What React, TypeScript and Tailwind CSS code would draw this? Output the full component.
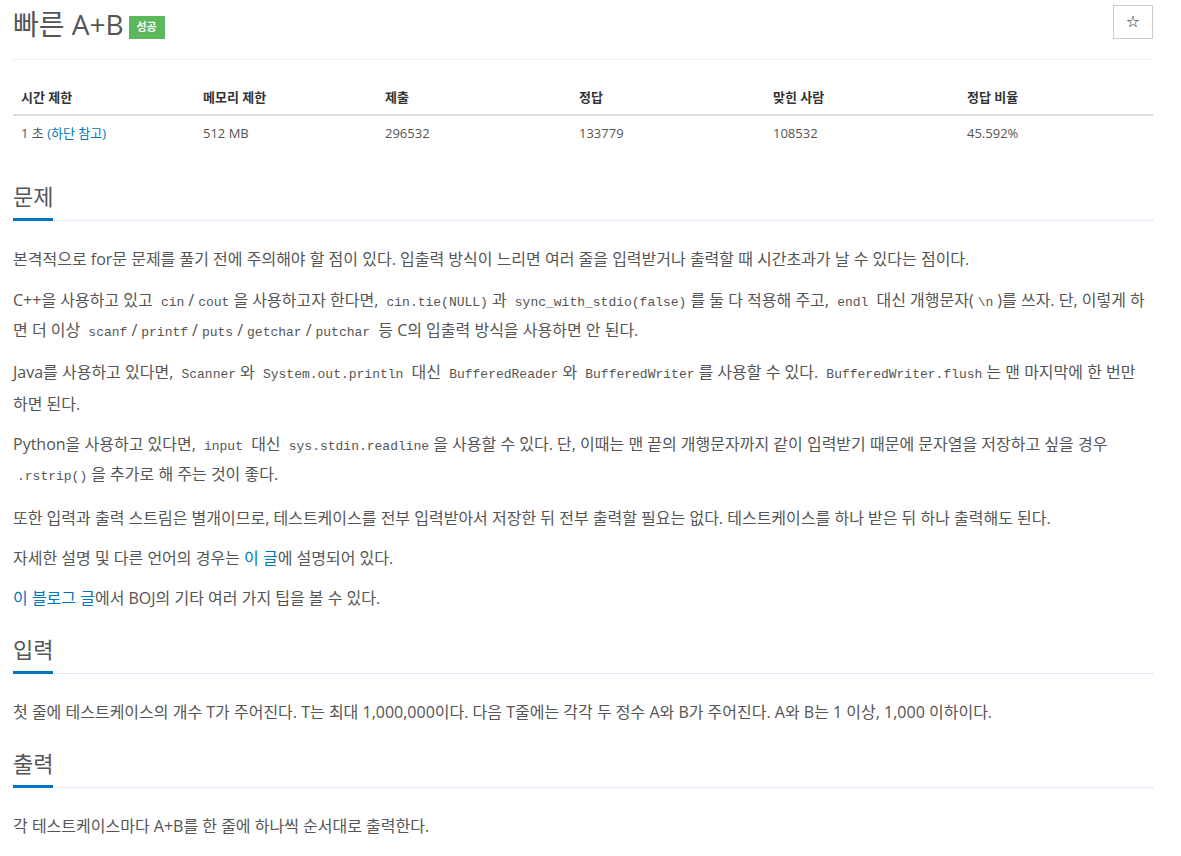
import React from "react";

const C = ({ children }: { children: React.ReactNode }) => (
  <code className="px-[4px] text-[13px] leading-none text-[#555]" style={{ fontFamily: '"Liberation Mono", "DejaVu Sans Mono", monospace' }}>
    {children}
  </code>
);

const A = ({ children }: { children: React.ReactNode }) => (
  <a className="text-[#0076c0]">{children}</a>
);

const Heading = ({ children, className = "" }: { children: React.ReactNode; className?: string }) => (
  <div className={"border-b border-dotted border-[#c9d7e8] " + className}>
    <h2 className="inline-block border-b-[3px] border-[#0076c0] -mb-[1px] pb-[7px] text-[22px] leading-[30px] text-[#555] font-normal">
      {children}
    </h2>
  </div>
);

export default function App() {
  const cols = [
    { w: "w-[182px]", h: "시간 제한" },
    { w: "w-[182px]", h: "메모리 제한" },
    { w: "w-[194px]", h: "제출" },
    { w: "w-[194px]", h: "정답" },
    { w: "w-[194px]", h: "맞힌 사람" },
    { w: "w-[194px]", h: "정답 비율" },
  ];
  return (
    <div
      className="w-[1181px] min-h-[856px] bg-white px-[13px] text-[#555]"
      style={{ fontFamily: '"Open Sans", "Noto Sans CJK KR", sans-serif' }}
    >
      <div className="w-[1140px]">
        {/* title */}
        <div className="flex items-start justify-between border-b border-[#eee] pb-[9px] pt-[5px] h-[60px]">
          <div className="flex items-center gap-[5px] pt-[2px]">
            <h1 className="text-[28px] leading-[34px] font-normal text-[#555]">빠른 A+B</h1>
            <span className="mt-[6px] inline-flex h-[23px] w-[36px] items-center justify-center bg-[#5cb85c] text-[11px] font-bold text-white">
              성공
            </span>
          </div>
          <button className="flex h-[34px] w-[40px] items-center justify-center border border-[#ccc] bg-white text-[16px] text-[#222]" style={{ fontFamily: '"DejaVu Sans", sans-serif' }}>
            ☆
          </button>
        </div>

        {/* table */}
        <table className="mt-[20px] w-[1140px] table-fixed border-collapse text-[13px]">
          <thead>
            <tr className="border-b-2 border-[#ddd]">
              {cols.map((c) => (
                <th key={c.h} className={c.w + " px-[8px] py-[8px] text-left font-bold leading-[18px] text-[#333]"}>
                  {c.h}
                </th>
              ))}
            </tr>
          </thead>
          <tbody>
            <tr>
              <td className="px-[8px] py-[8px] leading-[18px]">
                1 초 <A>(하단 참고)</A>
              </td>
              <td className="px-[8px] py-[8px] leading-[18px]">512 MB</td>
              <td className="px-[8px] py-[8px] leading-[18px]">296532</td>
              <td className="px-[8px] py-[8px] leading-[18px]">133779</td>
              <td className="px-[8px] py-[8px] leading-[18px]">108532</td>
              <td className="px-[8px] py-[8px] leading-[18px]">45.592%</td>
            </tr>
          </tbody>
        </table>

        {/* 문제 */}
        <Heading className="mt-[31px]">문제</Heading>
        <div className="mt-[23px] text-[16px] leading-[30px]">
          <p className="mb-[11px]">
            본격적으로 for문 문제를 풀기 전에 주의해야 할 점이 있다. 입출력 방식이 느리면 여러 줄을 입력받거나 출력할 때 시간초과가 날 수 있다는 점이다.
          </p>
          <p className="mb-[11px]">
            C++을 사용하고 있고 <C>cin</C>/<C>cout</C>을 사용하고자 한다면, <C>cin.tie(NULL)</C>과 <C>sync_with_stdio(false)</C>를 둘 다 적용해 주고, <C>endl</C> 대신 개행문자(<C>\n</C>)를 쓰자. 단, 이렇게 하면 더 이상 <C>scanf</C>/<C>printf</C>/<C>puts</C>/<C>getchar</C>/<C>putchar</C> 등 C의 입출력 방식을 사용하면 안 된다.
          </p>
          <p className="mb-[9px] leading-[32px]">
            Java를 사용하고 있다면, <C>Scanner</C>와 <C>System.out.println</C> 대신 <C>BufferedReader</C>와 <C>BufferedWriter</C>를 사용할 수 있다. <C>BufferedWriter.flush</C>는 맨 마지막에 한 번만 하면 된다.
          </p>
          <p className="mb-[14px]">
            Python을 사용하고 있다면, <C>input</C> 대신 <C>sys.stdin.readline</C>을 사용할 수 있다. 단, 이때는 맨 끝의 개행문자까지 같이 입력받기 때문에 문자열을 저장하고 싶을 경우 <C>.rstrip()</C>을 추가로 해 주는 것이 좋다.
          </p>
          <p className="mb-[10px]">
            또한 입력과 출력 스트림은 별개이므로, 테스트케이스를 전부 입력받아서 저장한 뒤 전부 출력할 필요는 없다. 테스트케이스를 하나 받은 뒤 하나 출력해도 된다.
          </p>
          <p className="mb-[10px]">
            자세한 설명 및 다른 언어의 경우는 <A>이 글</A>에 설명되어 있다.
          </p>
          <p>
            <A>이 블로그 글</A>에서 BOJ의 기타 여러 가지 팁을 볼 수 있다.
          </p>
        </div>

        {/* 입력 */}
        <Heading className="mt-[21px]">입력</Heading>
        <div className="mt-[23px] text-[16px] leading-[30px]">
          <p>첫 줄에 테스트케이스의 개수 T가 주어진다. T는 최대 1,000,000이다. 다음 T줄에는 각각 두 정수 A와 B가 주어진다. A와 B는 1 이상, 1,000 이하이다.</p>
        </div>

        {/* 출력 */}
        <Heading className="mt-[21px]">출력</Heading>
        <div className="mt-[23px] text-[16px] leading-[30px]">
          <p>각 테스트케이스마다 A+B를 한 줄에 하나씩 순서대로 출력한다.</p>
        </div>
      </div>
    </div>
  );
}
